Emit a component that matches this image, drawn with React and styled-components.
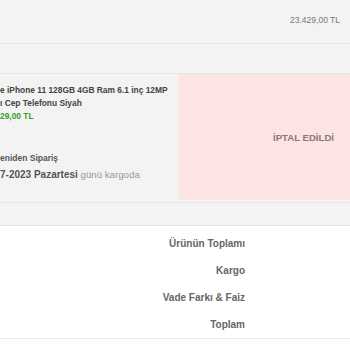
import React from 'react';
import styled, { createGlobalStyle } from 'styled-components';

const GlobalStyle = createGlobalStyle`
  html, body {
    margin: 0;
    padding: 0;
    background: #ffffff;
    font-family: "Liberation Sans", Arial, sans-serif;
    overflow: hidden;
  }
`;

const Page = styled.div`
  width: 350px;
  display: flex;
  flex-direction: column;
`;

const Header = styled.div`
  height: 44px;
  background: #f3f3f3;
  border-bottom: 1px solid #e6e6e6;
  display: flex;
  justify-content: flex-end;
  padding: 15px 10px 0 0;
  box-sizing: border-box;
  font-size: 8.5px;
  color: #777;
`;

const Band = styled.div`
  height: ${p => p.h}px;
  background: #f3f3f3;
  border-bottom: 1px solid #e6e6e6;
  box-sizing: border-box;
`;

const ItemRow = styled.div`
  display: flex;
  height: 129px;
  background: #f3f3f3;
  border-bottom: 1px solid #e6e6e6;
  box-sizing: border-box;
  padding-bottom: 2px;
`;

const Product = styled.div`
  width: 179px;
  padding-top: 10px;
  display: flex;
  flex-direction: column;
`;

const ProductLine = styled.div`
  font-size: 8.4px;
  line-height: 13px;
  font-weight: bold;
  color: ${p => (p.price ? '#3b9a2c' : '#444')};
  white-space: nowrap;
`;

const Reorder = styled.div`
  margin-top: 29px;
  font-size: 8.5px;
  line-height: 13px;
  color: #555;
  font-weight: 600;
`;

const Delivery = styled.div`
  margin-top: 3px;
  font-size: 9.7px;
  line-height: 13px;
  color: #999;
  white-space: nowrap;

  b {
    color: #555;
    font-size: 10px;
  }
`;

const Status = styled.div`
  flex: 1;
  background: #fde4e4;
  display: flex;
  align-items: center;
  justify-content: flex-end;
  padding: 0 16px 0 0;
  font-size: 9.6px;
  font-weight: bold;
  color: #8c7676;
`;

const Summary = styled.div`
  background: #fff;
  padding-top: 4px;
  border-bottom: 1px solid #ececec;
  display: flex;
  flex-direction: column;
  align-items: flex-end;
  width: 350px;
  box-sizing: border-box;
  padding-right: 105px;
`;

const SummaryLabel = styled.div`
  height: 27px;
  line-height: 27px;
  font-size: 10px;
  font-weight: bold;
  color: #666;
`;

export default function App() {
  return (
    <>
      <GlobalStyle />
      <Page>
        <Header>23.429,00 TL</Header>
        <Band h={30} />
        <ItemRow>
          <Product>
            <ProductLine>e iPhone 11 128GB 4GB Ram 6.1 inç 12MP</ProductLine>
            <ProductLine>ı Cep Telefonu Siyah</ProductLine>
            <ProductLine price>29,00 TL</ProductLine>
            <Reorder>eniden Sipariş</Reorder>
            <Delivery>
              <b>7-2023 Pazartesi</b> günü kargoda
            </Delivery>
          </Product>
          <Status>İPTAL EDİLDİ</Status>
        </ItemRow>
        <Band h={23} />
        <Summary>
          <SummaryLabel>Ürünün Toplamı</SummaryLabel>
          <SummaryLabel>Kargo</SummaryLabel>
          <SummaryLabel>Vade Farkı &amp; Faiz</SummaryLabel>
          <SummaryLabel>Toplam</SummaryLabel>
        </Summary>
      </Page>
    </>
  );
}
